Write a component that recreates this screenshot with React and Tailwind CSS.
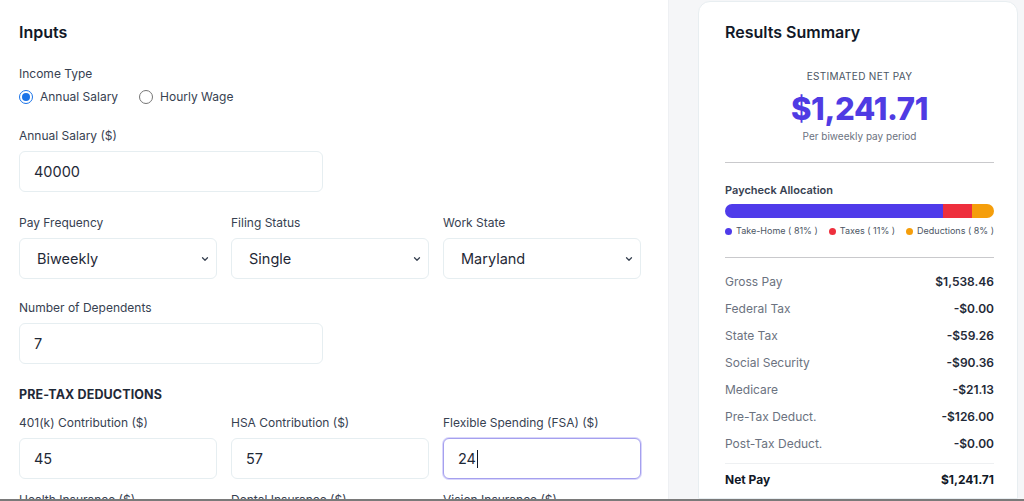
import { ChevronDown } from "lucide-react";

const font = { fontFamily: "Inter, 'Noto Sans', sans-serif" };

const Field = ({ label, value, focused }) => (
	<div>
		<div className="pt-[1px] text-[12px] leading-[18px] text-[#374151]">{label}</div>
		<div
			className={`mt-[6px] flex h-[41px] items-center rounded-md border bg-white px-[14px] text-[14.5px] text-[#1f2937] ${
				focused ? "border-[#a5a0ee] ring-1 ring-[#d9d6fb]" : "border-[#e6eef1]"
			}`}
		>
			{value}
			{focused && <span className="ml-[1px] h-[18px] w-px bg-[#111827]" />}
		</div>
	</div>
);

const Select = ({ label, value }) => (
	<div>
		<div className="pt-[1px] text-[12px] leading-[18px] text-[#374151]">{label}</div>
		<div className="mt-[6px] flex h-[41px] items-center justify-between rounded-md border border-[#e6eef1] bg-white pl-[17px] pr-[6px] text-[14.5px] text-[#1f2937]">
			{value}
			<ChevronDown size={10} strokeWidth={3} className="text-[#374151]" />
		</div>
	</div>
);

const Radio = ({ label, checked }) => (
	<label className="flex items-center gap-[7px] text-[12px] text-[#374151]">
		<span
			className={`flex h-[14px] w-[14px] items-center justify-center rounded-full border ${
				checked ? "border-[#1a73e8]" : "border-[#767676]"
			}`}
		>
			{checked && <span className="h-[8px] w-[8px] rounded-full bg-[#1a73e8]" />}
		</span>
		{label}
	</label>
);

const rows = [
	["Gross Pay", "$1,538.46"],
	["Federal Tax", "-$0.00"],
	["State Tax", "-$59.26"],
	["Social Security", "-$90.36"],
	["Medicare", "-$21.13"],
	["Pre-Tax Deduct.", "-$126.00"],
	["Post-Tax Deduct.", "-$0.00"],
];

const Legend = ({ color, label }) => (
	<span className="flex items-center gap-[4px]">
		<span className={`h-[7px] w-[7px] rounded-full ${color}`} />
		{label}
	</span>
);

export default function App() {
	return (
		<div className="flex h-[501px] flex-col overflow-hidden bg-[#f5f6f8]" style={font}>
			<div className="flex flex-1 overflow-hidden">
				<section className="w-[669px] shrink-0 border-r border-[#eef0f3] bg-white pl-[19px] pr-[27px] pt-[20px]">
					<h2 className="text-[16px] font-semibold leading-6 text-[#111827]">Inputs</h2>

					<div className="mt-[21px] text-[12px] leading-[18px] text-[#374151]">Income Type</div>
					<div className="mt-[5px] flex h-[18px] items-center gap-[21px]">
						<Radio label="Annual Salary" checked />
						<Radio label="Hourly Wage" />
					</div>

					<div className="mt-[20px] grid grid-cols-2 gap-x-[14px]">
						<div>
							<div className="pt-[1px] text-[12px] leading-[18px] text-[#374151]">Annual Salary ($)</div>
							<div className="mt-[6px] flex h-[41px] items-center rounded-md border border-[#e6eef1] px-[14px] text-[14.5px] text-[#1f2937]">
								40000
							</div>
						</div>
					</div>

					<div className="mt-[21px] grid grid-cols-3 gap-x-[14px]">
						<Select label="Pay Frequency" value="Biweekly" />
						<Select label="Filing Status" value="Single" />
						<Select label="Work State" value="Maryland" />
					</div>

					<div className="mt-[19px] grid grid-cols-2 gap-x-[14px]">
						<Field label="Number of Dependents" value="7" />
					</div>

					<div className="mt-[22px] text-[12.5px] font-bold uppercase leading-[18px] tracking-[0.01em] text-[#1f2937]">
						Pre-Tax Deductions
					</div>
					<div className="mt-[9px] grid grid-cols-3 gap-x-[14px] gap-y-[11px]">
						<Field label="401(k) Contribution ($)" value="45" />
						<Field label="HSA Contribution ($)" value="57" />
						<Field label="Flexible Spending (FSA) ($)" value="24" focused />
						<Field label="Health Insurance ($)" value="0" />
						<Field label="Dental Insurance ($)" value="0" />
						<Field label="Vision Insurance ($)" value="0" />
					</div>
				</section>

				<aside className="ml-[29px] mt-[1px] w-[320px] shrink-0 rounded-t-xl border border-[#e8eef1] bg-white pl-[26px] pr-[23px] pt-[18px]">
					<h2 className="text-[16px] font-semibold leading-6 text-[#111827]">Results Summary</h2>

					<div className="mt-[25px] text-center">
						<div className="text-[10px] uppercase leading-[14px] tracking-[0.03em] text-[#4b5563]">
							Estimated Net Pay
						</div>
						<div className="mt-[8px] text-[31px] font-extrabold leading-[36px] tracking-[-0.01em] text-[#4f3be3]">
							$1,241.71
						</div>
						<div className="mt-[2px] text-[10px] leading-[14px] text-[#6b7280]">Per biweekly pay period</div>
					</div>

					<div className="mt-[19px] h-px bg-[#c9c9cc]" />

					<div className="mt-[19px] text-[11px] font-semibold leading-[16px] text-[#374151]">Paycheck Allocation</div>
					<div className="mt-[6px] flex h-[14px] overflow-hidden rounded-full">
						<div className="w-[81%] bg-[#4f3bea]" />
						<div className="w-[11%] bg-[#ee2f3d]" />
						<div className="flex-1 bg-[#f59e0b]" />
					</div>
					<div className="mt-[7px] flex items-center justify-between text-[9px] leading-[12px] text-[#4b5563]">
						<Legend color="bg-[#4f3bea]" label="Take-Home ( 81% )" />
						<Legend color="bg-[#ee2f3d]" label="Taxes ( 11% )" />
						<Legend color="bg-[#f59e0b]" label="Deductions ( 8% )" />
					</div>

					<div className="mt-[20px] h-px bg-[#c9c9cc]" />

					<div className="pt-[10px]">
						{rows.map(([k, v]) => (
							<div key={k} className="flex h-[27px] items-center justify-between text-[12px]">
								<span className="text-[#6b7280]">{k}</span>
								<span className="font-semibold text-[#1f2937]">{v}</span>
							</div>
						))}
					</div>
					<div className="mt-[6px] h-px bg-[#eef0f2]" />
					<div className="flex h-[31px] items-center justify-between text-[12px] font-bold text-[#111827]">
						<span>Net Pay</span>
						<span>$1,241.71</span>
					</div>
				</aside>
			</div>
			<div className="h-[2px] shrink-0 bg-[#7a7a7a]" />
		</div>
	);
}
